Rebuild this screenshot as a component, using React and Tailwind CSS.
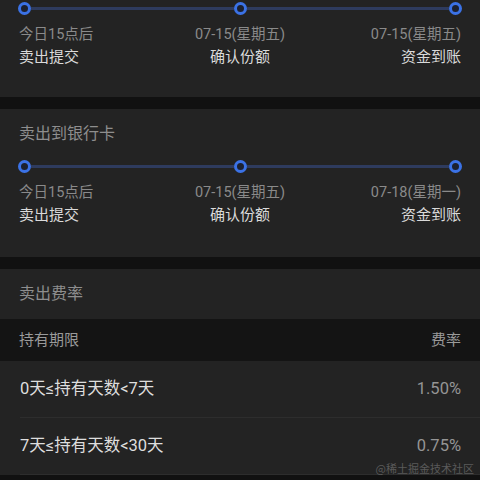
const font = { fontFamily: 'Roboto, "Noto Sans CJK SC", sans-serif' };

const Dot = () => (
    <div className="w-[13px] h-[13px] rounded-full border-[3px] border-[#3b72e6] bg-[#1c2130] shrink-0" />
);

const Timeline = ({ steps }) => (
    <div>
        <div className="flex items-center -mx-[1px] h-[13px]">
            <Dot />
            <div className="flex-1 h-[3px] bg-[#2e3b5e]" />
            <Dot />
            <div className="flex-1 h-[3px] bg-[#2e3b5e]" />
            <Dot />
        </div>
        <div className="grid grid-cols-3 mt-[9px]">
            {steps.map((s, i) => (
                <div
                    key={i}
                    className={i === 0 ? "text-left" : i === 1 ? "text-center" : "text-right"}
                >
                    <div className="h-[22px] leading-[22px] text-[14.5px] text-[#8a8a8a]">{s.date}</div>
                    <div className="h-[22px] leading-[22px] text-[15px] text-[#dadada]">{s.label}</div>
                </div>
            ))}
        </div>
    </div>
);

const rates = [
    { range: "0天≤持有天数<7天", rate: "1.50%" },
    { range: "7天≤持有天数<30天", rate: "0.75%" },
];

export default function App() {
    return (
        <div className="relative w-[480px] h-[480px] overflow-hidden bg-[#111111]" style={font}>
            <div className="bg-[#232323] px-[19px] pt-[2px] pb-[29px]">
                <Timeline
                    steps={[
                        { date: "今日15点后", label: "卖出提交" },
                        { date: "07-15(星期五)", label: "确认份额" },
                        { date: "07-15(星期五)", label: "资金到账" },
                    ]}
                />
            </div>

            <div className="mt-[12px] bg-[#232323] px-[19px] pt-[14px] pb-[31px]">
                <div className="h-[22px] leading-[22px] text-[16px] text-[#8e8e8e] mb-[15px]">卖出到银行卡</div>
                <Timeline
                    steps={[
                        { date: "今日15点后", label: "卖出提交" },
                        { date: "07-15(星期五)", label: "确认份额" },
                        { date: "07-18(星期一)", label: "资金到账" },
                    ]}
                />
            </div>

            <div className="mt-[12px] bg-[#232323]">
                <div className="h-[50px] flex items-center px-[19px] text-[16px] text-[#8e8e8e]">卖出费率</div>
                <div className="h-[42px] flex items-center justify-between px-[19px] bg-[#141414] text-[15px] text-[#9a9a9a]">
                    <span>持有期限</span>
                    <span>费率</span>
                </div>
                {rates.map((r) => (
                    <div key={r.range} className="ml-[20px] border-b border-[#2d2d2d]">
                        <div className="h-[56px] flex items-center justify-between pr-[19px]">
                            <span className="text-[16.5px] text-[#dedede]">{r.range}</span>
                            <span className="text-[16.5px] text-[#959595]">{r.rate}</span>
                        </div>
                    </div>
                ))}
            </div>

            <div
                className="absolute right-[6px] bottom-[4px] text-[11px] text-[#5a5a5a]"
                style={{ fontFamily: '"Noto Sans CJK SC", serif' }}
            >
                @稀土掘金技术社区
            </div>
        </div>
    );
}
